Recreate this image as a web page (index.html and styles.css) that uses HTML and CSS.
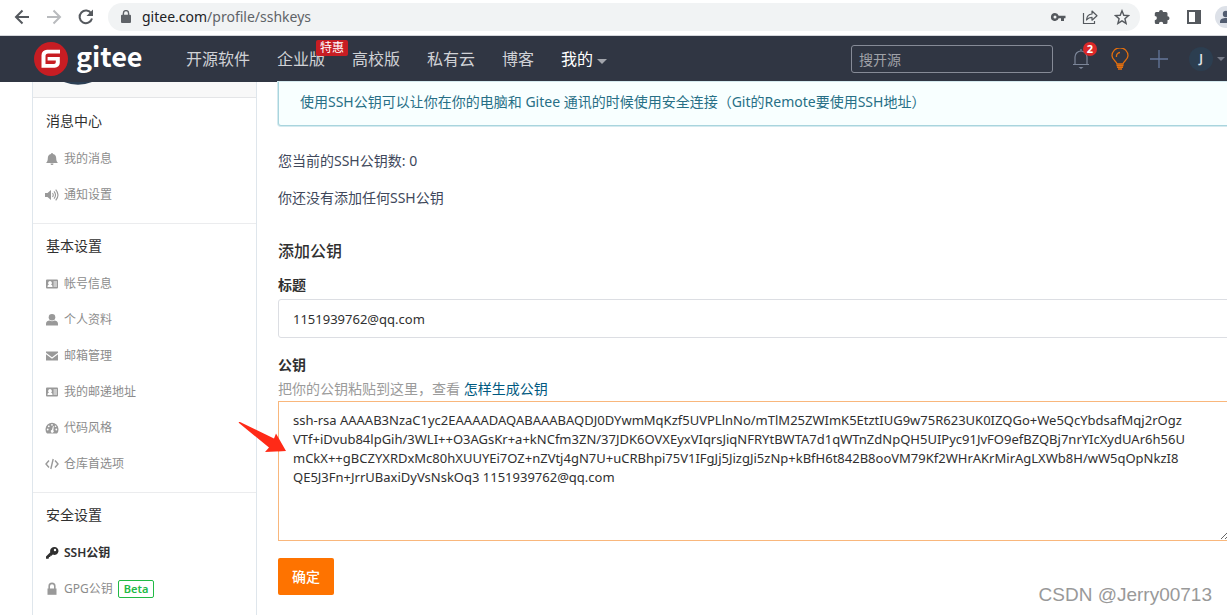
FILE: index.html
```html
<!DOCTYPE html>
<html lang="zh-CN">
<head>
<meta charset="utf-8">
<title>SSH公钥 - Gitee.com</title>
<link rel="stylesheet" href="styles.css">
</head>
<body>
<div class="browser-bar">
  <div class="browser-nav">
    <button class="icon-button" aria-label="后退"><svg width="16" height="16" viewBox="0 0 16 16" fill="none" stroke="#55595e" stroke-width="2"><path d="M15 8H2.500M8.500 1.500L2 8l6.500 6.500"/></svg></button>
    <button class="icon-button" aria-label="前进"><svg width="16" height="16" viewBox="0 0 16 16" fill="none" stroke="#b9bbbe" stroke-width="2"><path d="M1 8h12.500M7.500 1.500L14 8l-6.500 6.500"/></svg></button>
    <button class="icon-button" aria-label="刷新"><svg width="16" height="16" viewBox="0 0 16 16"><path d="M13.300 4.600A6.300 6.300 0 1 0 14 9.500" fill="none" stroke="#55595e" stroke-width="2"/><path d="M15 0.500v6.500H8.500z" fill="#55595e"/></svg></button>
  </div>
  <div class="omnibox">
    <svg width="10" height="13" viewBox="0 0 10 13"><path d="M1 4.800h8a1 1 0 0 1 1 1V12a1 1 0 0 1-1 1H1a1 1 0 0 1-1-1V5.800a1 1 0 0 1 1-1z" fill="#5f6368"/><path d="M2.400 5V3.200a2.600 2.600 0 0 1 5.200 0V5" fill="none" stroke="#5f6368" stroke-width="1.400"/></svg>
    <span class="url"><span class="url-host">gitee.com</span>/profile/sshkeys</span>
    <div class="omnibox-tools">
      <button class="icon-button" aria-label="密码"><svg width="16" height="16" viewBox="0 0 16 16"><path fill="#55595e" fill-rule="evenodd" d="M5 4a4 4 0 1 0 3.700 5.300H11V12h3V9.300h1.500V6.700H8.700A4 4 0 0 0 5 4zm0 2.500a1.500 1.500 0 1 1 0 3 1.500 1.500 0 0 1 0-3z"/></svg></button>
      <button class="icon-button" aria-label="分享"><svg width="16" height="16" viewBox="0 0 16 16" fill="none" stroke="#55595e" stroke-width="1.200"><path d="M1.500 4v10.500h11V12"/><path d="M4.500 11C4.800 7 7 5.200 10 5V2l5 4.700-5 4.500V8.300C7.500 8.300 6 9 4.500 11z" stroke-linejoin="round"/></svg></button>
      <button class="icon-button" aria-label="收藏"><svg width="16" height="16" viewBox="0 0 16 16" fill="none" stroke="#55595e" stroke-width="1.400"><path d="M8 1.800l1.800 4.500 4.700.300-3.600 3.100 1.200 4.700L8 11.800l-4.100 2.600 1.200-4.700L1.500 6.600l4.700-.300z"/></svg></button>
    </div>
  </div>
  <div class="browser-tools">
    <button class="icon-button" aria-label="扩展程序"><svg width="16" height="16" viewBox="0 0 16 16"><path fill="#55595e" d="M5 3a2 2 0 0 1 4 0h3a1.500 1.500 0 0 1 1.500 1.500v2.700a2 2 0 0 1 0 4V13.500A1.500 1.500 0 0 1 12 15H9.300a2.200 2.200 0 0 0-4.400 0H2.300A1.500 1.500 0 0 1 .8 13.500v-2.300a2.100 2.100 0 0 0 0-4.200V4.500A1.500 1.500 0 0 1 2.300 3z"/></svg></button>
    <button class="icon-button" aria-label="侧边栏"><svg width="16" height="16" viewBox="0 0 16 16"><path fill="#55595e" fill-rule="evenodd" d="M1 1h14v14H1zm2 2v10h6V3z"/></svg></button>
    <button class="icon-button" aria-label="用户"><svg width="22" height="22" viewBox="0 0 22 22"><circle cx="11" cy="11" r="11" fill="#dde1e8"/><circle cx="11" cy="8" r="3.200" fill="#525d70"/><path d="M5 17v-1.500c0-2.500 3-3.500 6-3.500s6 1 6 3.500V17z" fill="#525d70"/></svg></button>
  </div>
</div>

<header class="site-header">
  <a class="logo" href="#">
    <svg width="34" height="34" viewBox="0 0 34 34"><circle cx="17" cy="17" r="17" fill="#c71d23"/><path d="M26 7.700H13A5.500 5.500 0 0 0 7.500 13.200V25.700h13.300a5 5 0 0 0 5-5V15H13.600v3.500h8.200v1.700a1.700 1.700 0 0 1-1.700 1.700h-8.600v-7.800a2.600 2.600 0 0 1 2.600-2.600H26z" fill="#fff"/></svg>
    <span>gitee</span>
  </a>
  <nav class="site-nav">
    <a href="#">开源软件</a>
    <a class="has-tag" href="#">企业版<span class="tag">特惠</span></a>
    <a href="#">高校版</a>
    <a href="#">私有云</a>
    <a href="#">博客</a>
    <a class="current" href="#">我的<span class="caret"></span></a>
  </nav>
  <input class="search" type="search" placeholder="搜开源" aria-label="搜开源">
  <div class="user-tools">
    <a class="bell" href="#" aria-label="通知"><svg width="18" height="22" viewBox="0 0 18 22" fill="none" stroke="#7c8699" stroke-width="1.200"><path d="M1 16.500h16M3 16.500V9a6 6 0 0 1 12 0v7.500M9 3V1"/><path d="M6.500 19h5L9 21z" fill="#7c8699" stroke="none"/></svg><span class="count">2</span></a>
    <a href="#" aria-label="提示"><svg width="18" height="22" viewBox="0 0 18 22" fill="none" stroke="#e36f0e" stroke-width="1.300"><path d="M6 16c0-2.500-5-4-5-8.200a8 8 0 0 1 16 0C17 12 12 13.500 12 16zM5.500 9A3.800 3.800 0 0 1 9 4.500"/><path d="M5.500 17.500h7M6 19.300h6M7 21h4" stroke-width="1.500"/></svg></a>
    <a href="#" aria-label="新建"><svg width="18" height="18" viewBox="0 0 18 18" stroke="#64779a" stroke-width="1.300"><path d="M9 0v18M0 9h18"/></svg></a>
    <a class="account" href="#"><span class="avatar">J</span><span class="caret caret-dim"></span></a>
  </div>
</header>

<div class="page">
  <aside class="sidebar">
    <div class="profile"><svg width="48" height="3" viewBox="0 0 48 3"><path d="M10 0Q24 5.500 38 0z" fill="#2c3f54"/></svg></div>
    <section class="menu">
      <h2>消息中心</h2>
      <a href="#"><svg width="14" height="14" viewBox="0 0 14 14"><path d="M7 1a1 1 0 0 1 1 1c2.200.500 3.200 2 3.200 4.200 0 2.600.800 3.700 1.800 4.800H1c1-1.100 1.800-2.200 1.800-4.800C2.800 4 3.800 2.500 6 2a1 1 0 0 1 1-1zM5.500 11.500h3a1.500 1.500 0 0 1-3 0z"/></svg>我的消息</a>
      <a href="#"><svg width="14" height="14" viewBox="0 0 14 14"><path d="M0 5h2.500L6 2v10L2.500 9H0z"/><path d="M7.500 5q1.500 2 0 4M9 3.300q3 3.700 0 7.400M10.700 1.700q4.600 5.300 0 10.600" fill="none" stroke="#999" stroke-width="1.100"/></svg>通知设置</a>
    </section>
    <section class="menu">
      <h2>基本设置</h2>
      <a href="#"><svg width="14" height="14" viewBox="0 0 14 14"><path fill-rule="evenodd" d="M2 2.500h10a1 1 0 0 1 1 1v7a1 1 0 0 1-1 1H2a1 1 0 0 1-1-1v-7a1 1 0 0 1 1-1zM2.500 10h5c0-1.700-.700-2.200-1.500-2.400a1.900 1.900 0 1 0-2 0C3.200 7.800 2.500 8.300 2.500 10zM8.500 4.500v1H12v-1zm0 2v1H12v-1zm0 2v1H12v-1z"/></svg>帐号信息</a>
      <a href="#"><svg width="14" height="14" viewBox="0 0 14 14"><circle cx="7" cy="4.300" r="3.300"/><path d="M1 12.500v-1.800C1 8.500 3 7.700 4.500 7.500q2.500 1.500 5 0c1.500.200 3.500 1 3.500 3.200v1.800z"/></svg>个人资料</a>
      <a href="#"><svg width="14" height="14" viewBox="0 0 14 14"><path d="M1 2.500h12v1.300L7 8.200 1 3.800zM1 5.300l6 4.400 6-4.400v6.200H1z"/></svg>邮箱管理</a>
      <a href="#"><svg width="14" height="14" viewBox="0 0 14 14"><path fill-rule="evenodd" d="M2 2.500h10a1 1 0 0 1 1 1v7a1 1 0 0 1-1 1H2a1 1 0 0 1-1-1v-7a1 1 0 0 1 1-1zM2.500 10h5c0-1.700-.700-2.200-1.500-2.400a1.900 1.900 0 1 0-2 0C3.200 7.800 2.500 8.300 2.500 10zM8.500 4.500v1H12v-1zm0 2v1H12v-1zm0 2v1H12v-1z"/></svg>我的邮递地址</a>
      <a href="#"><svg width="14" height="14" viewBox="0 0 14 14"><path d="M2 12.500a6.500 6.500 0 1 1 10 0z"/><g fill="#fff"><circle cx="2.700" cy="8.500" r=".9"/><circle cx="3.800" cy="5.300" r=".9"/><circle cx="7" cy="3.800" r=".9"/><circle cx="11.300" cy="8.500" r=".9"/><circle cx="10.500" cy="5.300" r=".8"/><path d="M8 5l.8.200-.5 4A1.500 1.500 0 1 1 7 8.800z"/></g></svg>代码风格</a>
      <a href="#"><svg width="14" height="14" viewBox="0 0 14 14"><path d="M4 3.500L1 7l3 3.500M10 3.500L13 7l-3 3.500M8.200 2L5.800 12" fill="none" stroke="#999" stroke-width="1.400"/></svg>仓库首选项</a>
    </section>
    <section class="menu">
      <h2>安全设置</h2>
      <a class="active" href="#"><svg width="14" height="14" viewBox="0 0 14 14"><path fill-rule="evenodd" d="M9 1a4 4 0 1 1-1.200 7.600L6.600 9.800H5.300v1.300H4l-.400 1.600H1v-2.300l4.300-4.200A4 4 0 0 1 9 1zm1 1.800a1.200 1.200 0 1 0 0 2.400 1.200 1.200 0 0 0 0-2.400z"/></svg>SSH公钥</a>
      <a href="#"><svg width="14" height="14" viewBox="0 0 14 14"><path d="M2.500 6.500h9v6.300h-9z"/><path d="M4.200 7V4.200a2.800 2.800 0 0 1 5.600 0V7" fill="none" stroke="#999" stroke-width="1.600"/></svg>GPG公钥<span class="beta">Beta</span></a>
    </section>
  </aside>

  <main class="content">
    <p class="notice">使用SSH公钥可以让你在你的电脑和 Gitee 通讯的时候使用安全连接（Git的Remote要使用SSH地址）</p>
    <p class="info">您当前的SSH公钥数: 0</p>
    <p class="info">你还没有添加任何SSH公钥</p>
    <form class="key-form">
      <h1>添加公钥</h1>
      <label for="title">标题</label>
      <input id="title" type="text" value="1151939762@qq.com">
      <label for="key">公钥</label>
      <p class="hint">把你的公钥粘贴到这里，查看 <a href="#">怎样生成公钥</a></p>
      <textarea id="key" spellcheck="false">ssh-rsa AAAAB3NzaC1yc2EAAAADAQABAAABAQDJ0DYwmMqKzf5UVPLlnNo/mTlM25ZWImK5EtztIUG9w75R623UK0IZQGo+We5QcYbdsafMqj2rOgz
VTf+iDvub84lpGih/3WLI++O3AGsKr+a+kNCfm3ZN/37JDK6OVXEyxVIqrsJiqNFRYtBWTA7d1qWTnZdNpQH5UIPyc91JvFO9efBZQBj7nrYIcXydUAr6h56U
mCkX++gBCZYXRDxMc80hXUUYEi7OZ+nZVtj4gN7U+uCRBhpi75V1IFgJj5JizgJi5zNp+kBfH6t842B8ooVM79Kf2WHrAKrMirAgLXWb8H/wW5qOpNkzI8
QE5J3Fn+JrrUBaxiDyVsNskOq3 1151939762@qq.com</textarea>
      <button class="submit" type="button">确定</button>
      <svg class="pointer-arrow" width="50" height="34" viewBox="0 0 50 34"><path d="M1 2Q0 .500 2 1L36 17.500 38 12.500 48 30 27 31 31 26.500z" fill="#ff2a17"/></svg>
    </form>
  </main>
</div>
<div class="watermark">CSDN @Jerry00713</div>
</body>
</html>
```
FILE: styles.css
```css
* { box-sizing: border-box; }

body {
  margin: 0;
  height: 100vh;
  overflow: hidden;
  display: flex;
  flex-direction: column;
  background: #fff;
  color: #40485b;
  font: 14px/20px "Noto Sans", "Noto Sans CJK SC", sans-serif;
}

a { color: inherit; text-decoration: none; }
svg { display: block; flex: none; }
h1, h2, p { margin: 0; }
button, input, textarea { font: inherit; }

.icon-button {
  display: flex;
  padding: 0;
  border: 0;
  background: none;
}

/* Browser toolbar */
.browser-bar {
  flex: none;
  display: flex;
  align-items: center;
  height: 36px;
  padding: 0 0 2px 14px;
  border-bottom: 1px solid #d5d7dc;
  overflow: hidden;
}
.browser-nav { display: flex; gap: 16px; margin-right: 14px; }
.omnibox {
  flex: 1;
  display: flex;
  align-items: center;
  height: 28px;
  padding: 0 10px 0 13px;
  border-radius: 14px;
  background: #f1f3f4;
}
.url {
  margin-left: 11px;
  color: #5f6368;
  font-size: 14px;
}
.url-host { color: #202124; }
.omnibox-tools { display: flex; gap: 16px; margin-left: auto; }
.browser-tools {
  display: flex;
  align-items: center;
  gap: 16px;
  margin: 0 -10px 0 14px;
}
.browser-tools .icon-button:last-child { margin-left: -3px; }

/* Site header */
.site-header {
  flex: none;
  display: flex;
  align-items: center;
  height: 46px;
  padding: 0 2px 0 34px;
  background: #303643;
}
.logo {
  display: flex;
  align-items: center;
  gap: 8px;
  width: 152px;
  color: #fff;
  font: 700 27px/34px "Noto Sans CJK SC", sans-serif;
}
.logo span { padding-bottom: 6px; }
.site-nav {
  display: flex;
  gap: 27px;
  color: #d0d2d6;
  font-size: 16px;
  line-height: 24px;
  white-space: nowrap;
}
.site-nav .current { display: flex; align-items: center; color: #fff; }
.has-tag { position: relative; }
.tag {
  position: absolute;
  top: -7px;
  left: 39px;
  padding: 0 4px;
  border-radius: 2px;
  background: #c71d23;
  color: #fff;
  font-size: 12px;
  line-height: 16px;
}
.caret {
  margin: 4px 0 0 4px;
  border: 5px solid transparent;
  border-top-color: #a2a5ac;
  border-bottom: 0;
}
.search {
  width: 202px;
  height: 28px;
  margin: 0 19px 0 auto;
  padding: 0 7px;
  border: 1px solid #868b97;
  border-radius: 3px;
  background: transparent;
  color: #fff;
}
.search::placeholder { color: #a0a2a8; opacity: 1; }
.user-tools { display: flex; align-items: center; gap: 21px; }
.bell { position: relative; }
.count {
  position: absolute;
  top: -6px;
  left: 11px;
  width: 14px;
  height: 14px;
  border-radius: 7px;
  background: #db2828;
  color: #fff;
  font-size: 11px;
  font-weight: 700;
  line-height: 14px;
  text-align: center;
}
.account { display: flex; align-items: center; }
.avatar {
  width: 24px;
  height: 24px;
  border-radius: 12px;
  background: #2c3e50;
  color: #e4e6e9;
  font-size: 12px;
  font-weight: 600;
  line-height: 24px;
  text-align: center;
}
.caret-dim {
  margin: 0 0 0 4px;
  border-width: 4px 4px 0;
  border-top-color: #747986;
}

/* Page columns */
.page {
  flex: 1;
  display: flex;
  align-items: stretch;
  gap: 21px;
  min-height: 0;
  padding-left: 32px;
}
.sidebar {
  flex: none;
  width: 225px;
  border: solid #dfe6ec;
  border-width: 0 1px;
}
.profile {
  height: 16px;
  margin-bottom: 1px;
  padding-left: 21px;
  border-bottom: 1px solid #e4e5e7;
  background: #f8f8f8;
}
.menu { padding: 8px 13px 10px; }
.menu + .menu { border-top: 1px solid #ebecee; }
.menu h2 {
  margin-bottom: 6px;
  color: #303030;
  font-size: 14px;
  font-weight: 400;
  line-height: 28px;
}
.menu a {
  display: flex;
  align-items: center;
  gap: 5px;
  height: 36px;
  color: #8c8c8c;
  font-size: 12px;
}
.menu svg { margin-left: -1px; fill: #999; }
.menu .active { color: #303030; font-weight: 600; }
.menu .active svg { fill: #303030; }
.beta {
  padding: 0 5px;
  border: 1px solid #21ba45;
  border-radius: 2px;
  color: #21ba45;
  font-size: 11px;
  font-weight: 600;
  line-height: 16px;
}

.content {
  flex: 1;
  min-width: 0;
  margin-right: -3px;
}
.notice {
  margin-bottom: 25px;
  padding: 10px 21px 13px;
  border: solid #a9d5de;
  border-width: 0 1px 1px;
  border-radius: 0 0 3px 3px;
  box-shadow: 0 0 0 1px #d5eaef;
  background: #f8ffff;
  color: #276f86;
}
.info { margin-bottom: 17px; }
.key-form { position: relative; padding-top: 14px; }
.key-form h1 {
  margin-bottom: 12px;
  color: #303030;
  font-size: 16px;
  font-weight: 500;
  line-height: 24px;
}
.key-form label {
  display: block;
  color: #303030;
  font-weight: 600;
}
.key-form input {
  display: block;
  width: 100%;
  height: 39px;
  margin: 4px 0 17px;
  padding: 0 14px;
  border: 1px solid #dcdee3;
  border-radius: 3px;
  color: #303030;
  font-size: 13px;
}
.hint { margin: 4px 0 2px; color: #9b9b9b; }
.hint a { color: #005980; }
.key-form textarea {
  display: block;
  width: 100%;
  height: 140px;
  padding: 9px 14px;
  border: 1px solid #f9b77c;
  outline: 0;
  color: #303030;
  font-size: 13px;
  line-height: 19px;
  white-space: pre;
  overflow: hidden;
  resize: both;
}
.submit {
  margin-top: 17px;
  padding: 0 14px;
  border: 0;
  border-radius: 2px;
  background: #fe7300;
  color: #fff;
  font-weight: 500;
  line-height: 37px;
}
.pointer-arrow {
  position: absolute;
  top: 196px;
  left: -40px;
}
.watermark {
  position: absolute;
  right: 15px;
  bottom: 8px;
  color: #999;
  font: 19px/24px "Liberation Sans", sans-serif;
}
```
